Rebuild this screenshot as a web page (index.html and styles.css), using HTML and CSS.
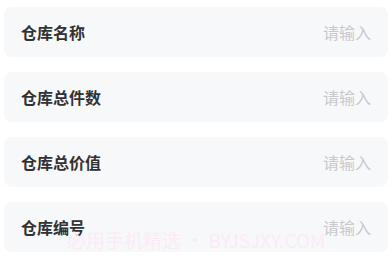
FILE: index.html
```html
<!DOCTYPE html>
<html>
  <head>
    <meta charset="UTF-8">
    <title>仓库信息</title>
    <link rel="stylesheet" href="styles.css">
  </head>
  <body>
    <div class="form">
      <div class="field">
        <label class="field-label">仓库名称</label>
        <input class="field-input" type="text" placeholder="请输入">
      </div>
      <div class="field">
        <label class="field-label">仓库总件数</label>
        <input class="field-input" type="text" placeholder="请输入">
      </div>
      <div class="field">
        <label class="field-label">仓库总价值</label>
        <input class="field-input" type="text" placeholder="请输入">
      </div>
      <div class="field">
        <label class="field-label">仓库编号</label>
        <input class="field-input" type="text" placeholder="请输入">
      </div>
    </div>
    <div class="watermark">必用手机精选 • BYJSJXY.COM</div>
  </body>
</html>
```

FILE: styles.css
```css
/* page */
body {
  margin: 0;
  background-color: #ffffff;
  font-family: "Noto Sans CJK SC", "Noto Sans", sans-serif;
}

.form {
  display: flex;
  flex-direction: column;
  gap: 15px;
  padding: 7px 4px;
}

/* one row of the form */
.field {
  display: flex;
  align-items: center;
  height: 50px;
  padding: 0 17px;
  background-color: #f7f8fa;
  border-radius: 8px;
}

.field-label {
  flex: none;
  color: #323233;
  font-size: 16px;
  font-weight: bold;
}

.field-input {
  flex: 1;
  min-width: 0;
  border: none;
  outline: none;
  background: transparent;
  text-align: right;
  font-family: inherit;
  font-size: 16px;
  color: #323233;
  padding: 0;
}

.field-input::placeholder {
  color: #c8c9cc;
}

/* watermark over the last row */
.watermark {
  position: absolute;
  left: 67px;
  top: 226px;
  font-family: "Noto Sans CJK SC", "Noto Sans", sans-serif;
  font-size: 19px;
  color: #fdeaf7;
  white-space: nowrap;
  pointer-events: none;
}
```
